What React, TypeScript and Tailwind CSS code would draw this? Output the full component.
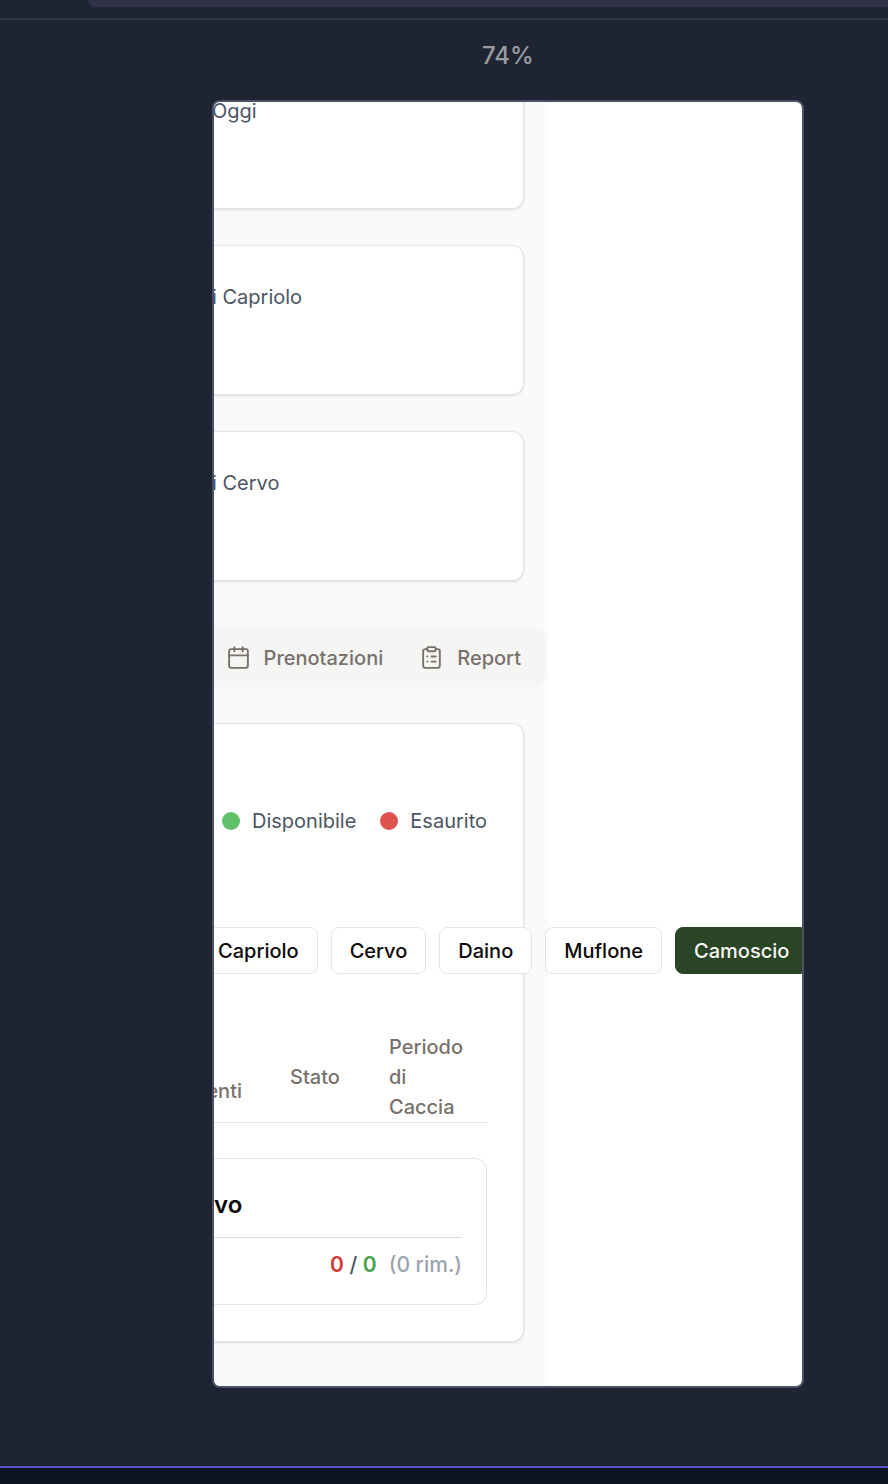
import { Calendar, ClipboardList } from "lucide-react";

const speciesTabs = ["Capriolo", "Cervo", "Daino", "Muflone", "Camoscio"];

function StatCard({ label }: { label: string }) {
  return (
    <section className="h-[150px] rounded-r-xl border border-l-0 border-[#e7e5e4] bg-white py-9 shadow-sm">
      <h3 className="-ml-0.5 whitespace-nowrap text-[20px] leading-[30px] text-[#4b5563]">{label}</h3>
    </section>
  );
}

function TabBar() {
  return (
    <nav className="-mr-[21px] mt-[47px] flex h-[59px] items-center justify-end gap-9 rounded-r-xl bg-[#f5f5f4] pr-6 text-[20px] font-medium text-[#78716c]">
      <button type="button" className="flex items-center gap-[13px]">
        <Calendar className="size-[25px]" strokeWidth={1.8} aria-hidden="true" />
        Prenotazioni
      </button>
      <button type="button" className="flex items-center gap-[13px]">
        <ClipboardList className="size-[25px]" strokeWidth={1.8} aria-hidden="true" />
        Report
      </button>
    </nav>
  );
}

function Legend() {
  return (
    <ul className="flex justify-end gap-6 text-[20px] leading-[30px] text-[#4b5563]">
      <li className="flex items-center gap-3">
        <span className="size-[18px] rounded-full bg-[#5fc26b]" />
        Disponibile
      </li>
      <li className="flex items-center gap-3">
        <span className="size-[18px] rounded-full bg-[#de524c]" />
        Esaurito
      </li>
    </ul>
  );
}

function SpeciesButtons() {
  return (
    <div className="-ml-[15px] mt-[91px] flex gap-[13px]">
      {speciesTabs.map((name) => (
        <button
          key={name}
          type="button"
          className={
            name === "Camoscio"
              ? "h-[47px] shrink-0 rounded-lg border border-[#2a4426] bg-[#2a4426] px-[18px] text-[20px] font-medium text-[#f5f5f4]"
              : "h-[47px] shrink-0 rounded-lg border border-[#e7e5e4] bg-white px-[18px] text-[20px] font-medium text-[#0c0a09]"
          }
        >
          {name}
        </button>
      ))}
    </div>
  );
}

function QuotaTable() {
  return (
    <table className="mt-[58px] w-full table-fixed border-b border-[#e5e5e5] text-left text-[20px] leading-[30px] text-[#78716c]">
      <colgroup>
        <col className="w-[52px]" />
        <col />
        <col className="w-[122px]" />
      </colgroup>
      <thead>
        <tr>
          <th scope="col" className="pt-7 font-medium">
            <span className="-ml-3 flex w-10 justify-end">enti</span>
          </th>
          <th scope="col" className="px-6 font-medium">Stato</th>
          <th scope="col" className="pl-6 font-medium">
            Periodo
            <br />
            di
            <br />
            Caccia
          </th>
        </tr>
      </thead>
    </table>
  );
}

function QuotaSummary() {
  return (
    <section className="mt-[35px] rounded-r-xl border border-l-0 border-[#e5e5e5] pb-6 pr-6 pt-7">
      <h2 className="border-b border-[#dedede] pb-[14px] text-[24px] font-semibold leading-9 text-[#0c0a09]">vo</h2>
      <p className="flex justify-end whitespace-pre pt-3 text-[21px] font-medium leading-[30px] text-[#4b5563]">
        <span className="font-semibold text-[#d03a33]">0</span>
        {" / "}
        <span className="font-semibold text-[#46a04c]">0</span>
        <span className="ml-3 text-[#9ca3af]">(0 rim.)</span>
      </p>
    </section>
  );
}

export default function App() {
  return (
    <div className="flex min-h-screen flex-col bg-[#1f2433] font-['Inter',sans-serif]">
      <header className="h-5 border-b-2 border-[#2d3242] pl-[88px]">
        <div className="h-[7px] rounded-bl-lg bg-[#2e3244]" />
      </header>
      <main className="flex grow flex-col items-center overflow-hidden pb-[78px] pl-32 pt-[18px]">
        <p className="text-[24px] font-medium leading-9 text-[#9a9ca1]">74%</p>
        <div className="mt-[26px] w-full max-w-[592px] overflow-hidden rounded-lg border-2 border-[#4c5163] bg-white">
          <div className="-mt-[43px] w-[334px] bg-[#f9fafc] pb-11 pr-6">
            <div className="flex flex-col gap-9">
              <StatCard label="Oggi" />
              <StatCard label="i Capriolo" />
              <StatCard label="i Cervo" />
            </div>
            <TabBar />
            <section className="mt-9 rounded-r-xl border border-l-0 border-[#e5e5e5] bg-white pb-9 pr-9 pt-[82px] shadow-sm">
              <Legend />
              <SpeciesButtons />
              <QuotaTable />
              <QuotaSummary />
            </section>
          </div>
        </div>
      </main>
      <footer className="h-[18px] border-t-2 border-[#5b50cc] bg-[#0e1424]" />
    </div>
  );
}
